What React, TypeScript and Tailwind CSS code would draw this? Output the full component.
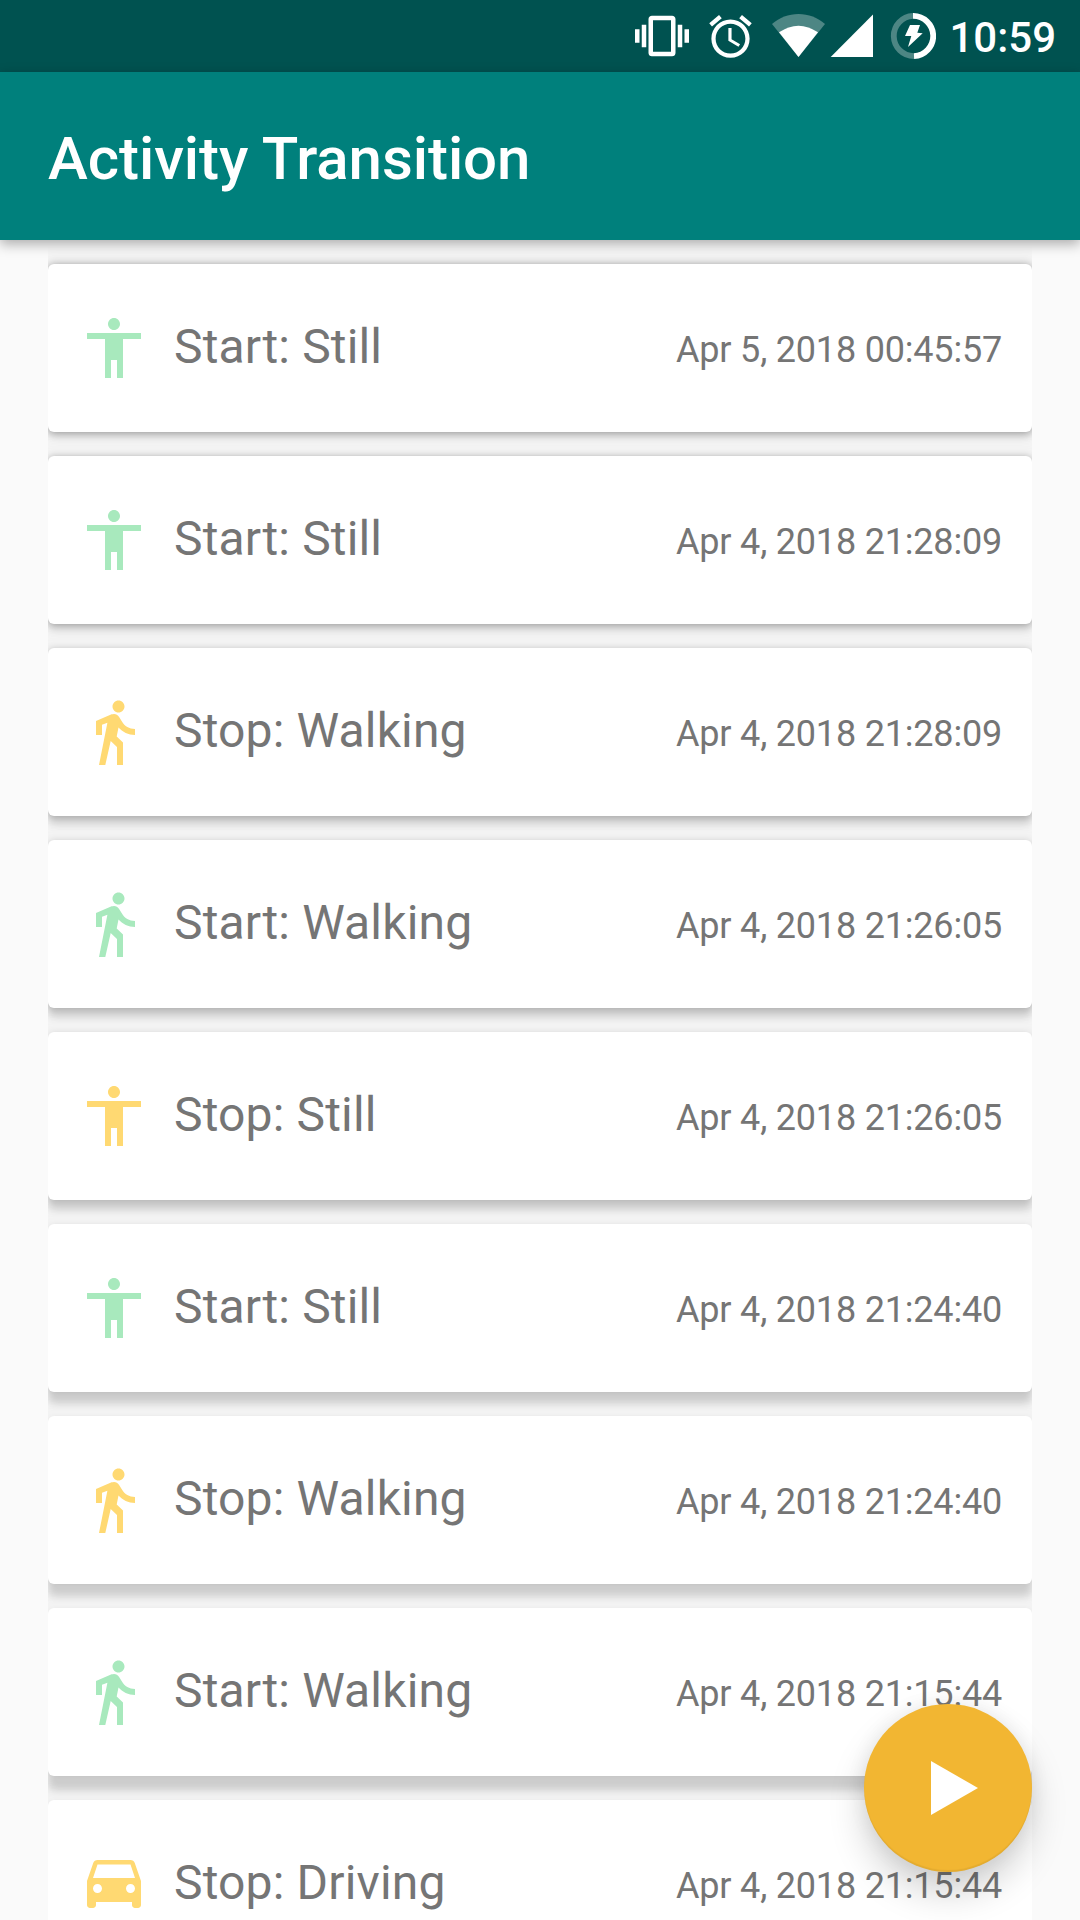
import React from "react";

type Activity = "Still" | "Walking" | "Driving";

interface Transition {
  kind: "Start" | "Stop";
  activity: Activity;
  time: string;
  shadow: string;
}

// Shadows fall further the lower a card sits on the screen.
const transitions: Transition[] = [
  { kind: "Start", activity: "Still", time: "Apr 5, 2018 00:45:57", shadow: "shadow-[0_0_8px_rgba(0,0,0,0.28),0_4px_9px_rgba(0,0,0,0.16),0_0_10px_12px_rgba(0,0,0,0.032)]" },
  { kind: "Start", activity: "Still", time: "Apr 4, 2018 21:28:09", shadow: "shadow-[0_0_7px_rgba(0,0,0,0.22),0_5px_9px_rgba(0,0,0,0.18),0_0_10px_12px_rgba(0,0,0,0.032)]" },
  { kind: "Stop", activity: "Walking", time: "Apr 4, 2018 21:28:09", shadow: "shadow-[0_0_6px_rgba(0,0,0,0.17),0_7px_9px_rgba(0,0,0,0.19),0_0_10px_12px_rgba(0,0,0,0.032)]" },
  { kind: "Start", activity: "Walking", time: "Apr 4, 2018 21:26:05", shadow: "shadow-[0_0_6px_rgba(0,0,0,0.13),0_8px_9px_rgba(0,0,0,0.19),0_0_10px_12px_rgba(0,0,0,0.032)]" },
  { kind: "Stop", activity: "Still", time: "Apr 4, 2018 21:26:05", shadow: "shadow-[0_0_6px_rgba(0,0,0,0.09),0_9px_9px_rgba(0,0,0,0.18),0_0_10px_12px_rgba(0,0,0,0.032)]" },
  { kind: "Start", activity: "Still", time: "Apr 4, 2018 21:24:40", shadow: "shadow-[0_0_5px_rgba(0,0,0,0.06),0_11px_9px_rgba(0,0,0,0.17),0_0_10px_12px_rgba(0,0,0,0.032)]" },
  { kind: "Stop", activity: "Walking", time: "Apr 4, 2018 21:24:40", shadow: "shadow-[0_0_5px_rgba(0,0,0,0.04),0_12px_8px_rgba(0,0,0,0.16),0_0_10px_12px_rgba(0,0,0,0.032)]" },
  { kind: "Start", activity: "Walking", time: "Apr 4, 2018 21:15:44", shadow: "shadow-[0_0_5px_rgba(0,0,0,0.03),0_14px_8px_rgba(0,0,0,0.16),0_0_10px_12px_rgba(0,0,0,0.032)]" },
  { kind: "Stop", activity: "Driving", time: "Apr 4, 2018 21:15:44", shadow: "shadow-[0_0_5px_rgba(0,0,0,0.03),0_14px_8px_rgba(0,0,0,0.16),0_0_10px_12px_rgba(0,0,0,0.032)]" },
];

const iconPaths: Record<Activity, string> = {
  Still:
    "M12 2c1.1 0 2 .9 2 2s-.9 2-2 2-2-.9-2-2 .9-2 2-2zm9 7h-6v13h-2v-6h-2v6H9V9H3V7h18v2z",
  Walking:
    "M13.5 5.5c1.1 0 2-.9 2-2s-.9-2-2-2-2 .9-2 2 .9 2 2 2zM9.8 8.9L7 23h2.1l1.8-8 2.1 2v6h2v-7.5l-2.1-2 .6-3C14.8 12 16.8 13 19 13v-2c-1.9 0-3.5-1-4.3-2.4l-1-1.6c-.4-.6-1-1-1.7-1-.3 0-.5.1-.8.1L6 8.3V13h2V9.6l1.8-.7",
  Driving:
    "M18.92 5.01C18.72 4.42 18.16 4 17.5 4h-11c-.66 0-1.21.42-1.42 1.01L3 11v8c0 .55.45 1 1 1h1c.55 0 1-.45 1-1v-1h12v1c0 .55.45 1 1 1h1c.55 0 1-.45 1-1v-8l-2.08-5.99zM6.5 15c-.83 0-1.5-.67-1.5-1.5S5.67 12 6.5 12s1.5.67 1.5 1.5S7.33 15 6.5 15zm11 0c-.83 0-1.5-.67-1.5-1.5s.67-1.5 1.5-1.5 1.5.67 1.5 1.5-.67 1.5-1.5 1.5zM5 10l1.5-4.5h11L19 10H5z",
};

function StatusBar() {
  return (
    <div className="flex h-[72px] shrink-0 items-start justify-end bg-[#005250] pr-[24px] text-white">
      <svg className="mt-[9px] h-[54px] w-[54px]" viewBox="0 0 24 24" fill="currentColor">
        <path d="M0 15h2V9H0v6zm3 2h2V7H3v10zm19-8v6h2V9h-2zm-3 8h2V7h-2v10zM16.5 3h-9C6.67 3 6 3.67 6 4.5v15c0 .83.67 1.5 1.5 1.5h9c.83 0 1.5-.67 1.5-1.5v-15c0-.83-.67-1.5-1.5-1.5zM16 19H8V5h8v14z" />
      </svg>
      <svg className="mt-[11px] ml-[16px] h-[51px] w-[51px]" viewBox="0 0 24 24" fill="currentColor">
        <path d="M22 5.72l-4.6-3.86-1.29 1.53 4.6 3.86L22 5.72zM7.88 3.39L6.6 1.86 2 5.71l1.29 1.53 4.59-3.85zM12.5 8H11v6l4.75 2.85.75-1.23-4-2.37V8zM12 4c-4.97 0-9 4.03-9 9s4.02 9 9 9c4.97 0 9-4.03 9-9s-4.03-9-9-9zm0 16c-3.87 0-7-3.13-7-7s3.13-7 7-7 7 3.13 7 7-3.13 7-7 7z" />
      </svg>
      <svg className="mt-[14px] ml-[16px] h-[44px] w-[54px]" viewBox="0 0 54 44" fill="currentColor">
        <path fillOpacity="0.3" d="M26.5 43L0 10C7.5 3.5 16.5 0 26.5 0S45.5 3.5 53 10Z" />
        <path d="M26.5 43L7 18.300Q26.5 5 46 18.300Z" />
      </svg>
      <svg className="mt-[14px] ml-[4px] h-[44px] w-[43px]" viewBox="0 0 43 44" fill="currentColor">
        <path d="M0.700 43H43V0.500Z" />
      </svg>
      <svg className="mt-[13px] ml-[17px] h-[46px] w-[46px]" viewBox="0 0 46 46" fill="none">
        <path d="M23 2.900A20.100 20.100 0 0 0 24 43.080" stroke="white" strokeOpacity="0.3" strokeWidth="5.800" />
        <path d="M23 2.900A20.100 20.100 0 0 1 24 43.080" stroke="white" strokeWidth="5.800" />
        <path d="M20 12H30L27.300 19.700L32.700 20.300L18 34L21.300 23H15Z" fill="white" />
      </svg>
      <span className="ml-[12px] w-[108px] text-right text-[42px] leading-[76px] font-medium whitespace-nowrap">10:59</span>
    </div>
  );
}

function TransitionCard({ kind, activity, time, shadow }: Transition) {
  return (
    <div className={`relative flex h-[168px] shrink-0 items-center rounded-[6px] bg-white px-[30px] text-[#757575] ${shadow}`}>
      <svg
        className={`h-[72px] w-[72px] ${kind === "Start" ? "text-[#a8e9bd]" : "text-[#ffd972]"}`}
        viewBox="0 0 24 24"
        fill="currentColor"
      >
        <path d={iconPaths[activity]} />
      </svg>
      <span className="mb-[2px] ml-[24px] flex-1 text-[48px] leading-[56px] tracking-[0.16px]">
        {kind}: {activity}
      </span>
      <span className="mt-[4px] text-[36px] leading-[42px] tracking-[-0.19px]">{time}</span>
    </div>
  );
}

export default function App() {
  return (
    <div className="relative flex h-[1920px] w-[1080px] flex-col overflow-hidden bg-[#fafafa] font-['Roboto',sans-serif]">
      <StatusBar />
      <header className="relative z-10 flex h-[168px] shrink-0 items-center bg-[#00807c] px-[48px] shadow-[0_4px_12px_rgba(0,0,0,0.32)]">
        <h1 className="mt-[6px] text-[60px] leading-[70px] font-medium tracking-[-0.06px] text-white">Activity Transition</h1>
      </header>
      <main className="mx-[48px] flex min-h-0 flex-1 flex-col gap-[24px] overflow-hidden pt-[24px]">
        {transitions.map((t, i) => (
          <TransitionCard key={i} {...t} />
        ))}
      </main>
      <button
        aria-label="Start tracking"
        className="absolute right-[48px] bottom-[48px] z-20 flex h-[168px] w-[168px] items-center justify-center rounded-full bg-[#f2b632] shadow-[0_20px_36px_rgba(0,0,0,0.18),0_0_20px_rgba(0,0,0,0.07),inset_0_-2px_1px_rgba(0,0,0,0.06)]"
      >
        <svg className="h-[72px] w-[72px]" viewBox="0 0 72 72" fill="white">
          <path d="M19 9V63L66 36Z" />
        </svg>
      </button>
    </div>
  );
}
